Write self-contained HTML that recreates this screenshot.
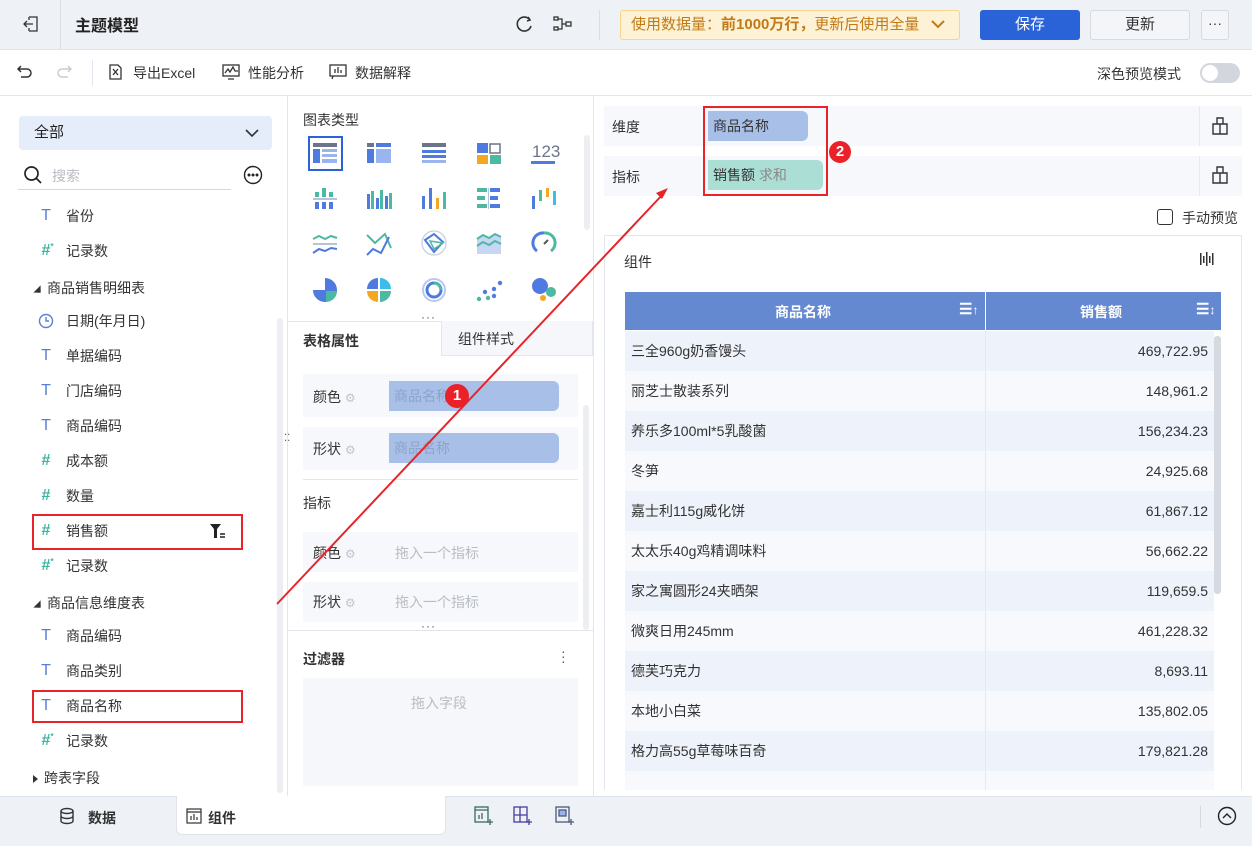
<!DOCTYPE html>
<html><head><meta charset="utf-8">
<style>
*{box-sizing:border-box;margin:0;padding:0}
body{width:1252px;height:846px;overflow:hidden;position:relative;background:#fff;font-family:"Liberation Sans","Noto Sans CJK SC",sans-serif;font-size:14px;color:#333}
.a{position:absolute}
.t{white-space:nowrap}
.li{position:absolute;left:38px;width:240px;white-space:nowrap;height:30px;line-height:30px;font-size:14px;color:#333}
.li .ic{position:absolute;left:0;top:0;width:16px;text-align:center;font-size:16px}
.li span.tx{position:absolute;left:28px}
.T{color:#5b7fd6;font-weight:normal}
.H{color:#3cb59f;font-weight:bold}
.grp{position:absolute;left:33px;font-size:14px;color:#333;line-height:20px}
.grp:before{content:"";display:inline-block;border-left:4px solid transparent;border-right:4px solid #333;border-top:4px solid transparent;border-bottom:4px solid #333;margin-right:6px;transform:scale(.9)}
.row{position:absolute;left:625px;width:589px;height:40px;line-height:40px;font-size:14px;color:#333}
.row .c1{position:absolute;left:6px}
.row .c2{position:absolute;right:6px}
.row .sep{position:absolute;left:360px;top:0;width:1px;height:40px;background:#e3e8f2}
</style></head><body>
<!-- top bar -->
<div class="a" style="left:0;top:0;width:1252px;height:50px;background:#eef1f6;border-bottom:1px solid #dfe3ea"></div>
<div class="a" style="left:60px;top:0;width:1px;height:50px;background:#d9dde4"></div>
<svg class="a" style="left:22px;top:15px" width="18" height="18" viewBox="0 0 18 18" fill="none" stroke="#333" stroke-width="1.3"><path d="M7 2h8v14H7M7 2v3M7 13v3M2 9h9M5 6L2 9l3 3"/></svg>
<div class="a t" style="left:75px;top:12px;font-size:16px;font-weight:bold;color:#222">主题模型</div>
<svg class="a" style="left:514px;top:14px" width="20" height="20" viewBox="0 0 20 20" fill="none" stroke="#333" stroke-width="1.6"><path d="M16 6A7 7 0 1 0 17 12"/><path d="M14 3l2 3-3 1"/></svg>
<svg class="a" style="left:553px;top:15px" width="20" height="18" viewBox="0 0 20 18" fill="none" stroke="#333" stroke-width="1.3"><rect x="1" y="2" width="4" height="3"/><rect x="1" y="12" width="4" height="3"/><rect x="13" y="7" width="5" height="4"/><path d="M5 4h4v10H5M9 9h4"/></svg>
<div class="a" style="left:599px;top:10px;width:1px;height:30px;background:#d9dde4"></div>
<div class="a t" style="left:620px;top:10px;width:340px;height:30px;background:#fdf1d6;border:1px solid #f7d48e;border-radius:3px;color:#c27b14;font-size:15px;line-height:28px;padding-left:10px">使用数据量：<b>前1000万行，</b>更新后使用全量</div>
<svg class="a" style="left:930px;top:18px" width="16" height="12" viewBox="0 0 16 12" fill="none" stroke="#c27b14" stroke-width="2"><path d="M2 3l6 6 6-6"/></svg>
<div class="a" style="left:980px;top:10px;width:100px;height:30px;background:#2a63d8;border-radius:3px;color:#fff;text-align:center;line-height:30px;font-size:15px">保存</div>
<div class="a" style="left:1090px;top:10px;width:100px;height:30px;background:#f3f5f8;border:1px solid #d5d9e0;border-radius:3px;color:#333;text-align:center;line-height:28px;font-size:15px">更新</div>
<div class="a" style="left:1201px;top:10px;width:28px;height:30px;background:#f3f5f8;border:1px solid #d5d9e0;border-radius:3px;color:#333;text-align:center;line-height:24px;font-size:14px">···</div>
<!-- toolbar -->
<div class="a" style="left:0;top:95px;width:1252px;height:1px;background:#e3e6ec"></div>
<svg class="a" style="left:16px;top:64px" width="18" height="16" viewBox="0 0 18 16" fill="none" stroke="#333" stroke-width="1.5"><path d="M5 2L2 5l3 3M2 5h9a4 4 0 0 1 0 8H5"/></svg>
<svg class="a" style="left:55px;top:64px" width="18" height="16" viewBox="0 0 18 16" fill="none" stroke="#c8ccd3" stroke-width="1.5"><path d="M13 2l3 3-3 3M16 5H7a4 4 0 0 0 0 8h6"/></svg>
<div class="a" style="left:92px;top:60px;width:1px;height:26px;background:#e3e6ec"></div>
<svg class="a" style="left:108px;top:64px" width="16" height="16" viewBox="0 0 16 16" fill="none" stroke="#333" stroke-width="1.3"><path d="M2 1h8l3 3v11H2z"/><path d="M5 5l5 6M10 5l-5 6"/></svg>
<div class="a t" style="left:133px;top:63px;font-size:14px">导出Excel</div>
<svg class="a" style="left:222px;top:64px" width="18" height="16" viewBox="0 0 18 16" fill="none" stroke="#333" stroke-width="1.3"><rect x="1" y="1" width="16" height="11"/><path d="M3 9l3-4 2 3 3-5 2 4h3M6 15h6"/></svg>
<div class="a t" style="left:248px;top:63px;font-size:14px">性能分析</div>
<svg class="a" style="left:329px;top:64px" width="18" height="16" viewBox="0 0 18 16" fill="none" stroke="#333" stroke-width="1.3"><rect x="1" y="1" width="16" height="11"/><path d="M6 9V5M9 9V3M12 9V6M4 12l-1 3"/></svg>
<div class="a t" style="left:355px;top:63px;font-size:14px">数据解释</div>
<div class="a t" style="left:1097px;top:64px;font-size:14px">深色预览模式</div>
<div class="a" style="left:1200px;top:63px;width:40px;height:20px;border-radius:10px;background:#d3d6dc"></div>
<div class="a" style="left:1202px;top:65px;width:16px;height:16px;border-radius:8px;background:#fff"></div>
<!-- panels separators -->
<div class="a" style="left:287px;top:96px;width:1px;height:700px;background:#e3e6ec"></div>
<div class="a" style="left:593px;top:96px;width:1px;height:700px;background:#e3e6ec"></div>
<!-- left panel -->
<div class="a t" style="left:19px;top:116px;width:253px;height:34px;background:#e5edfb;border-radius:4px;padding-left:15px;line-height:34px;font-size:15px;color:#222">全部</div>
<svg class="a" style="left:244px;top:127px" width="16" height="12" viewBox="0 0 16 12" fill="none" stroke="#333" stroke-width="1.6"><path d="M2 3l6 6 6-6"/></svg>
<svg class="a" style="left:23px;top:165px" width="20" height="20" viewBox="0 0 20 20" fill="none" stroke="#222" stroke-width="1.7"><circle cx="8.5" cy="8.5" r="6.5"/><path d="M13 13l5 5"/></svg>
<div class="a t" style="left:52px;top:166px;font-size:14px;color:#b8bcc4">搜索</div>
<div class="a" style="left:18px;top:189px;width:213px;height:1px;background:#d6d9df"></div>
<svg class="a" style="left:243px;top:165px" width="20" height="20" viewBox="0 0 20 20" fill="none" stroke="#222" stroke-width="1.4"><circle cx="10" cy="10" r="8.5"/><circle cx="6" cy="10" r=".8" fill="#222"/><circle cx="10" cy="10" r=".8" fill="#222"/><circle cx="14" cy="10" r=".8" fill="#222"/></svg>
<div class="li" style="top:201px"><span class="ic T">T</span><span class="tx">省份</span></div>
<div class="li" style="top:236px"><span class="ic H">#<sup style="font-size:8px;position:absolute;top:-4px">*</sup></span><span class="tx">记录数</span></div>
<div class="grp t" style="top:278px">商品销售明细表</div>
<div class="li" style="top:306px"><svg class="ic" style="top:7px" width="16" height="16" viewBox="0 0 16 16" fill="none" stroke="#5b7fd6" stroke-width="1.4"><circle cx="8" cy="8" r="6.5"/><path d="M8 4v4h3"/></svg><span class="tx">日期(年月日)</span></div>
<div class="li" style="top:341px"><span class="ic T">T</span><span class="tx">单据编码</span></div>
<div class="li" style="top:376px"><span class="ic T">T</span><span class="tx">门店编码</span></div>
<div class="li" style="top:411px"><span class="ic T">T</span><span class="tx">商品编码</span></div>
<div class="li" style="top:446px"><span class="ic H">#</span><span class="tx">成本额</span></div>
<div class="li" style="top:481px"><span class="ic H">#</span><span class="tx">数量</span></div>
<div class="li" style="top:516px"><span class="ic H">#</span><span class="tx">销售额</span></div>
<svg class="a" style="left:209px;top:523px" width="18" height="16" viewBox="0 0 18 16"><path d="M1 1h11L8 6v9H5V6z" fill="#222"/><path d="M11 11h5M11 14h5" stroke="#222" stroke-width="1.4"/></svg>
<div class="a" style="left:32px;top:514px;width:211px;height:36px;border:2px solid #e8242b"></div>
<div class="li" style="top:551px"><span class="ic H">#<sup style="font-size:8px;position:absolute;top:-4px">*</sup></span><span class="tx">记录数</span></div>
<div class="grp t" style="top:593px">商品信息维度表</div>
<div class="li" style="top:621px"><span class="ic T">T</span><span class="tx">商品编码</span></div>
<div class="li" style="top:656px"><span class="ic T">T</span><span class="tx">商品类别</span></div>
<div class="li" style="top:691px"><span class="ic T">T</span><span class="tx">商品名称</span></div>
<div class="a" style="left:32px;top:690px;width:211px;height:33px;border:2px solid #e8242b"></div>
<div class="li" style="top:726px"><span class="ic H">#<sup style="font-size:8px;position:absolute;top:-4px">*</sup></span><span class="tx">记录数</span></div>
<div class="a t" style="left:33px;top:768px;font-size:14px;line-height:20px"><span style="display:inline-block;border-left:5px solid #333;border-top:4px solid transparent;border-bottom:4px solid transparent;margin-right:6px"></span>跨表字段</div>
<div class="a" style="left:277px;top:318px;width:6px;height:475px;background:#eceef2;border-radius:3px"></div>
<div class="a" style="left:284px;top:436px;color:#555;font-size:10px;line-height:5px">⁚⁚</div>
<!-- middle panel -->
<div class="a t" style="left:303px;top:110px;font-size:14px;color:#333">图表类型</div>
<div class="a" style="left:308px;top:136px;width:35px;height:35px;border:2px solid #2a63d8"></div>
<svg class="a" style="left:303px;top:138px" width="270" height="170" viewBox="0 0 270 170">
 <g transform="translate(10,5)"><rect width="24" height="4" fill="#6b7489"/><rect y="6" width="7" height="14" fill="#4f7be0"/><rect x="9" y="6" width="15" height="3" fill="#9ab4ef"/><rect x="9" y="11" width="15" height="3" fill="#9ab4ef"/><rect x="9" y="16" width="15" height="4" fill="#9ab4ef"/></g>
 <g transform="translate(64,5)"><rect width="7" height="4" fill="#6b7489"/><rect x="9" width="15" height="4" fill="#4f7be0"/><rect y="6" width="7" height="14" fill="#4f7be0"/><rect x="9" y="6" width="15" height="14" fill="#9ab4ef"/></g>
 <g transform="translate(119,5)"><rect width="24" height="4" fill="#6b7489"/><rect y="7" width="24" height="3" fill="#4f7be0"/><rect y="12" width="24" height="3" fill="#4f7be0"/><rect y="17" width="24" height="3" fill="#9ab4ef"/></g>
 <g transform="translate(174,5)"><rect width="11" height="10" fill="#4f7be0"/><rect x="13" y="1" width="10" height="9" fill="none" stroke="#6b7489" stroke-width="1.5"/><rect y="12" width="11" height="9" fill="#f5a623"/><rect x="13" y="12" width="11" height="9" fill="#4cb9a2"/></g>
 <text x="229" y="19" font-size="17" fill="#6b7489" font-family="Liberation Sans">123</text><rect x="228" y="23" width="24" height="3" fill="#4f7be0"/>
 <g transform="translate(10,50)"><rect x="0" y="10" width="24" height="2" fill="#b8c3d6"/><rect x="2" y="4" width="4" height="5" fill="#4cb9a2"/><rect x="9" y="0" width="4" height="9" fill="#4cb9a2"/><rect x="16" y="4" width="4" height="5" fill="#4cb9a2"/><rect x="2" y="14" width="4" height="7" fill="#4f7be0"/><rect x="9" y="14" width="4" height="7" fill="#4f7be0"/><rect x="16" y="14" width="4" height="7" fill="#4f7be0"/></g>
 <g transform="translate(64,50)"><rect x="0" y="6" width="3" height="15" fill="#4f7be0"/><rect x="4" y="3" width="3" height="18" fill="#4cb9a2"/><rect x="9" y="10" width="3" height="11" fill="#4f7be0"/><rect x="13" y="2" width="3" height="19" fill="#4cb9a2"/><rect x="18" y="8" width="3" height="13" fill="#4f7be0"/><rect x="22" y="5" width="3" height="16" fill="#4cb9a2"/></g>
 <g transform="translate(119,50)"><rect x="0" y="8" width="3" height="13" fill="#4f7be0"/><rect x="7" y="0" width="3" height="21" fill="#4f7be0"/><rect x="14" y="10" width="3" height="11" fill="#f5a623"/><rect x="21" y="4" width="3" height="17" fill="#4cb9a2"/></g>
 <g transform="translate(174,50)"><rect x="0" y="0" width="10" height="4" fill="#4cb9a2"/><rect x="13" y="0" width="10" height="4" fill="#4f7be0"/><rect x="0" y="8" width="8" height="4" fill="#4cb9a2"/><rect x="13" y="8" width="8" height="4" fill="#4f7be0"/><rect x="0" y="16" width="10" height="4" fill="#4cb9a2"/><rect x="13" y="16" width="10" height="4" fill="#4f7be0"/><rect x="11" y="0" width="1" height="21" fill="#b8c3d6"/></g>
 <g transform="translate(229,50)"><rect x="0" y="8" width="3" height="13" fill="#4f7be0"/><rect x="7" y="2" width="3" height="11" fill="#4cb9a2"/><rect x="14" y="0" width="3" height="9" fill="#f5a623"/><rect x="21" y="3" width="3" height="14" fill="#3dbbe9"/></g>
 <g transform="translate(10,95)" fill="none" stroke-width="2"><path d="M0 6l6-3 6 3 6-3 6 2" stroke="#4cb9a2"/><path d="M0 11h24" stroke="#b8c3d6"/><path d="M0 20l6-4 6 2 6-3 6 1" stroke="#4f7be0"/></g>
 <g transform="translate(64,95)" fill="none" stroke-width="2"><path d="M0 2l8 8 10-9 6 14" stroke="#4cb9a2"/><path d="M0 22l6-6 8 4 8-16" stroke="#4f7be0"/></g>
 <g transform="translate(119,93)" fill="none"><circle cx="12" cy="12" r="12" stroke="#c9d1de" stroke-width="1.3"/><path d="M3 9l9-6 9 8-9 10z" stroke="#4f7be0" stroke-width="2"/><path d="M8 10l13 2-9 6z" stroke="#4cb9a2" stroke-width="1.5"/></g>
 <g transform="translate(174,95)"><path d="M0 6l6-4 6 3 6-4 6 3v17H0z" fill="#c7d6f5"/><path d="M0 6l6-4 6 3 6-4 6 3" stroke="#4cb9a2" stroke-width="2" fill="none"/><path d="M0 13l6-4 6 3 6-4 6 3" stroke="#4cb9a2" stroke-width="2" fill="none"/></g>
 <g transform="translate(229,93)" fill="none" stroke-width="3"><path d="M5 20A10 10 0 0 1 12 2" stroke="#4f7be0"/><path d="M12 2a10 10 0 0 1 7 18" stroke="#4cb9a2"/><path d="M12 13l4-4" stroke="#555" stroke-width="2"/></g>
 <g transform="translate(10,140)"><path d="M12 12V0a12 12 0 1 1-12 12z" fill="#4f7be0"/><path d="M13 13h11a11 11 0 0 1-11 11z" fill="#4cb9a2"/></g>
 <g transform="translate(64,140)"><path d="M11 11V0A11 11 0 0 0 0 11z" fill="#4f7be0"/><path d="M13 0a11 11 0 0 1 11 11H13z" fill="#3dbbe9"/><path d="M0 13h11v11A11 11 0 0 1 0 13z" fill="#f5a623"/><path d="M13 13h11a11 11 0 0 1-11 11z" fill="#4cb9a2"/></g>
 <g transform="translate(119,140)" fill="none"><circle cx="12" cy="12" r="11" stroke="#b8c8ef" stroke-width="2"/><circle cx="12" cy="12" r="7" stroke="#4f7be0" stroke-width="3"/><path d="M12 5a7 7 0 0 1 7 7" stroke="#4cb9a2" stroke-width="3"/></g>
 <g transform="translate(174,140)"><circle cx="2" cy="21" r="2.2" fill="#4cb9a2"/><circle cx="8" cy="14" r="2.2" fill="#4f7be0"/><circle cx="11" cy="20" r="2.2" fill="#4cb9a2"/><circle cx="17" cy="11" r="2.2" fill="#4f7be0"/><circle cx="17" cy="18" r="2.2" fill="#4f7be0"/><circle cx="23" cy="5" r="2.2" fill="#4f7be0"/></g>
 <g transform="translate(229,140)"><circle cx="8" cy="8" r="8" fill="#4f7be0"/><circle cx="19" cy="14" r="5" fill="#4cb9a2"/><circle cx="11" cy="20" r="3" fill="#f5a623"/></g>
</svg>
<div class="a" style="left:584px;top:135px;width:6px;height:95px;background:#eceef2;border-radius:3px"></div>
<div class="a t" style="left:421px;top:310px;font-size:12px;color:#555;letter-spacing:1px">···</div>
<div class="a" style="left:288px;top:321px;width:305px;height:1px;background:#e3e6ec"></div>
<div class="a t" style="left:303px;top:331px;font-size:14px;font-weight:bold;color:#333">表格属性</div>
<div class="a t" style="left:441px;top:321px;width:152px;height:35px;background:#f5f7fa;border:1px solid #e3e6ec;border-top:none;padding-left:16px;line-height:36px;font-size:14px;color:#333">组件样式</div>
<div class="a" style="left:583px;top:405px;width:6px;height:225px;background:#eceef2;border-radius:3px"></div>
<div class="a" style="left:303px;top:374px;width:275px;height:43px;background:#f7f8fb"></div>
<div class="a t" style="left:313px;top:387px;font-size:14px">颜色 <span style="color:#c0c4cc;font-size:12px">⚙</span></div>
<div class="a t" style="left:389px;top:381px;width:170px;height:30px;background:#a8c0e8;border-radius:0 6px 6px 0;padding-left:5px;line-height:30px;color:#8da3c8;font-size:14px">商品名称</div>
<div class="a" style="left:303px;top:427px;width:275px;height:43px;background:#f7f8fb"></div>
<div class="a t" style="left:313px;top:439px;font-size:14px">形状 <span style="color:#c0c4cc;font-size:12px">⚙</span></div>
<div class="a t" style="left:389px;top:433px;width:170px;height:30px;background:#a8c0e8;border-radius:0 6px 6px 0;padding-left:5px;line-height:30px;color:#8da3c8;font-size:14px">商品名称</div>
<div class="a" style="left:303px;top:479px;width:275px;height:1px;background:#e3e6ec"></div>
<div class="a t" style="left:303px;top:493px;font-size:14px">指标</div>
<div class="a" style="left:303px;top:532px;width:275px;height:40px;background:#f7f8fb"></div>
<div class="a t" style="left:313px;top:543px;font-size:14px">颜色 <span style="color:#c0c4cc;font-size:12px">⚙</span></div>
<div class="a t" style="left:395px;top:543px;font-size:14px;color:#b8bcc4">拖入一个指标</div>
<div class="a" style="left:303px;top:582px;width:275px;height:40px;background:#f7f8fb"></div>
<div class="a t" style="left:313px;top:592px;font-size:14px">形状 <span style="color:#c0c4cc;font-size:12px">⚙</span></div>
<div class="a t" style="left:395px;top:592px;font-size:14px;color:#b8bcc4">拖入一个指标</div>
<div class="a t" style="left:421px;top:619px;font-size:12px;color:#555;letter-spacing:1px">···</div>
<div class="a" style="left:288px;top:630px;width:305px;height:1px;background:#e3e6ec"></div>
<div class="a t" style="left:303px;top:649px;font-size:14px;font-weight:bold">过滤器</div>
<div class="a" style="left:561px;top:649px;font-size:14px;line-height:5px;color:#555">·<br>·<br>·</div>
<div class="a" style="left:303px;top:678px;width:275px;height:108px;background:#f5f7fa"></div>
<div class="a t" style="left:411px;top:693px;font-size:14px;color:#b8bcc4">拖入字段</div>
<!-- right panel -->
<div class="a" style="left:604px;top:106px;width:638px;height:40px;background:#f7f8fb"></div>
<div class="a" style="left:1199px;top:106px;width:1px;height:40px;background:#e8eaee"></div>
<div class="a t" style="left:612px;top:117px;font-size:14px">维度</div>
<div class="a t" style="left:708px;top:111px;width:100px;height:30px;background:#a8c0e8;border-radius:0 6px 6px 0;padding-left:5px;line-height:30px;font-size:14px;color:#333">商品名称</div>
<div class="a" style="left:604px;top:156px;width:638px;height:40px;background:#f7f8fb"></div>
<div class="a" style="left:1199px;top:156px;width:1px;height:40px;background:#e8eaee"></div>
<div class="a t" style="left:612px;top:167px;font-size:14px">指标</div>
<div class="a t" style="left:708px;top:160px;width:115px;height:30px;background:#abdfd6;border-radius:0 6px 6px 0;padding-left:5px;line-height:30px;font-size:14px;color:#333">销售额 <span style="color:#888">求和</span></div>
<svg class="a" style="left:1212px;top:117px" width="16" height="18" viewBox="0 0 16 18" fill="none" stroke="#333" stroke-width="1.4"><path d="M5 1h6v6H5zM1 7h14v10H1zM8 7v10"/></svg>
<svg class="a" style="left:1212px;top:166px" width="16" height="18" viewBox="0 0 16 18" fill="none" stroke="#333" stroke-width="1.4"><path d="M5 1h6v6H5zM1 7h14v10H1zM8 7v10"/></svg>
<div class="a" style="left:703px;top:106px;width:125px;height:90px;border:2px solid #e8242b"></div>
<div class="a" style="left:829px;top:141px;width:22px;height:22px;border-radius:11px;background:#ec2028;color:#fff;font-weight:bold;text-align:center;line-height:22px;font-size:15px">2</div>
<div class="a" style="left:1157px;top:209px;width:16px;height:16px;border:1.5px solid #333;border-radius:3px"></div>
<div class="a t" style="left:1182px;top:208px;font-size:14px">手动预览</div>
<div class="a" style="left:604px;top:235px;width:638px;height:555px;border:1px solid #e3e6ec;border-bottom:none"></div>
<div class="a t" style="left:624px;top:252px;font-size:14px">组件</div>
<svg class="a" style="left:1199px;top:251px" width="16" height="16" viewBox="0 0 16 16" fill="#333"><rect x="1" y="2" width="1.5" height="12"/><rect x="4" y="5" width="1.5" height="7"/><rect x="7" y="1" width="1.5" height="14"/><rect x="10" y="5" width="1.5" height="7"/><rect x="13" y="2" width="1.5" height="12"/></svg>
<div class="a" style="left:625px;top:292px;width:596px;height:38px;background:#6589d1"></div>
<div class="a" style="left:985px;top:292px;width:1px;height:38px;background:#fff"></div>
<div class="a t" style="left:775px;top:302px;color:#fff;font-weight:bold;font-size:14px">商品名称</div>
<div class="a t" style="left:1080px;top:302px;color:#fff;font-weight:bold;font-size:14px">销售额</div>
<div class="a t" style="left:959px;top:300px;color:#fff;font-weight:bold;font-size:15px">☰<span style="font-size:12px">↑</span></div>
<div class="a t" style="left:1196px;top:300px;color:#fff;font-weight:bold;font-size:15px">☰<span style="font-size:12px">↕</span></div>
<div class="row" style="top:331px;background:#eef2fa"><span class="c1">三全960g奶香馒头</span><span class="c2">469,722.95</span><div class="sep"></div></div>
<div class="row" style="top:371px;background:#f7f9fd"><span class="c1">丽芝士散装系列</span><span class="c2">148,961.2</span><div class="sep"></div></div>
<div class="row" style="top:411px;background:#eef2fa"><span class="c1">养乐多100ml*5乳酸菌</span><span class="c2">156,234.23</span><div class="sep"></div></div>
<div class="row" style="top:451px;background:#f7f9fd"><span class="c1">冬笋</span><span class="c2">24,925.68</span><div class="sep"></div></div>
<div class="row" style="top:491px;background:#eef2fa"><span class="c1">嘉士利115g威化饼</span><span class="c2">61,867.12</span><div class="sep"></div></div>
<div class="row" style="top:531px;background:#f7f9fd"><span class="c1">太太乐40g鸡精调味料</span><span class="c2">56,662.22</span><div class="sep"></div></div>
<div class="row" style="top:571px;background:#eef2fa"><span class="c1">家之寓圆形24夹晒架</span><span class="c2">119,659.5</span><div class="sep"></div></div>
<div class="row" style="top:611px;background:#f7f9fd"><span class="c1">微爽日用245mm</span><span class="c2">461,228.32</span><div class="sep"></div></div>
<div class="row" style="top:651px;background:#eef2fa"><span class="c1">德芙巧克力</span><span class="c2">8,693.11</span><div class="sep"></div></div>
<div class="row" style="top:691px;background:#f7f9fd"><span class="c1">本地小白菜</span><span class="c2">135,802.05</span><div class="sep"></div></div>
<div class="row" style="top:731px;background:#eef2fa"><span class="c1">格力高55g草莓味百奇</span><span class="c2">179,821.28</span><div class="sep"></div></div>
<div class="row" style="top:771px;height:19px;background:#f7f9fd"><div class="sep" style="height:19px"></div></div>
<div class="a" style="left:1214px;top:336px;width:7px;height:258px;background:#d5d9e0;border-radius:3px"></div>
<!-- bottom bar -->
<div class="a" style="left:0;top:796px;width:1252px;height:50px;background:#eef1f6;border-top:1px solid #dfe3ea"></div>
<div class="a" style="left:176px;top:796px;width:270px;height:39px;background:#fff;border-radius:0 0 6px 6px;border:1px solid #dfe3ea;border-top:none"></div>
<svg class="a" style="left:59px;top:807px" width="16" height="18" viewBox="0 0 16 18" fill="none" stroke="#333" stroke-width="1.4"><ellipse cx="8" cy="4" rx="6" ry="2.5"/><path d="M2 4v10c0 1.4 2.7 2.5 6 2.5s6-1.1 6-2.5V4M2 9c0 1.4 2.7 2.5 6 2.5s6-1.1 6-2.5"/></svg>
<div class="a t" style="left:88px;top:808px;font-size:14px;font-weight:bold">数据</div>
<svg class="a" style="left:186px;top:808px" width="16" height="16" viewBox="0 0 16 16" fill="none" stroke="#333" stroke-width="1.2"><rect x="1" y="1" width="14" height="14"/><path d="M1 4h14M5 12V8M8 12V6M11 12V9"/></svg>
<div class="a t" style="left:208px;top:808px;font-size:14px;font-weight:bold">组件</div>
<svg class="a" style="left:474px;top:806px" width="20" height="20" viewBox="0 0 20 20" fill="none" stroke="#3a6b5a" stroke-width="1.3"><rect x="1" y="1" width="13" height="15"/><path d="M1 4h13M5 13V9M8 13V7M16 13v6M13 16h6"/></svg>
<svg class="a" style="left:513px;top:806px" width="20" height="20" viewBox="0 0 20 20" fill="none" stroke="#4a3aa0" stroke-width="1.3"><rect x="1" y="1" width="13" height="15"/><path d="M7 1v15M1 9h13M16 13v6M13 16h6"/></svg>
<svg class="a" style="left:555px;top:806px" width="20" height="20" viewBox="0 0 20 20" fill="none" stroke="#4a5a78" stroke-width="1.3"><rect x="1" y="1" width="13" height="15"/><rect x="4" y="4" width="7" height="6" fill="#9ab4ef"/><path d="M16 13v6M13 16h6"/></svg>
<div class="a" style="left:1200px;top:806px;width:1px;height:22px;background:#d5d9e0"></div>
<svg class="a" style="left:1217px;top:806px" width="20" height="20" viewBox="0 0 20 20" fill="none" stroke="#222" stroke-width="1.4"><circle cx="10" cy="10" r="8.5"/><path d="M6 12l4-4 4 4"/></svg>
<!-- red arrow -->
<svg class="a" style="left:0;top:0" width="1252" height="846" viewBox="0 0 1252 846"><line x1="277" y1="604" x2="664" y2="193" stroke="#e8242b" stroke-width="2"/><path d="M668 188l-12 5 6 6z" fill="#e8242b"/></svg>
<div class="a" style="left:445px;top:384px;width:24px;height:24px;border-radius:12px;background:#ec2028;color:#fff;font-weight:bold;text-align:center;line-height:24px;font-size:15px">1</div>
</body></html>
